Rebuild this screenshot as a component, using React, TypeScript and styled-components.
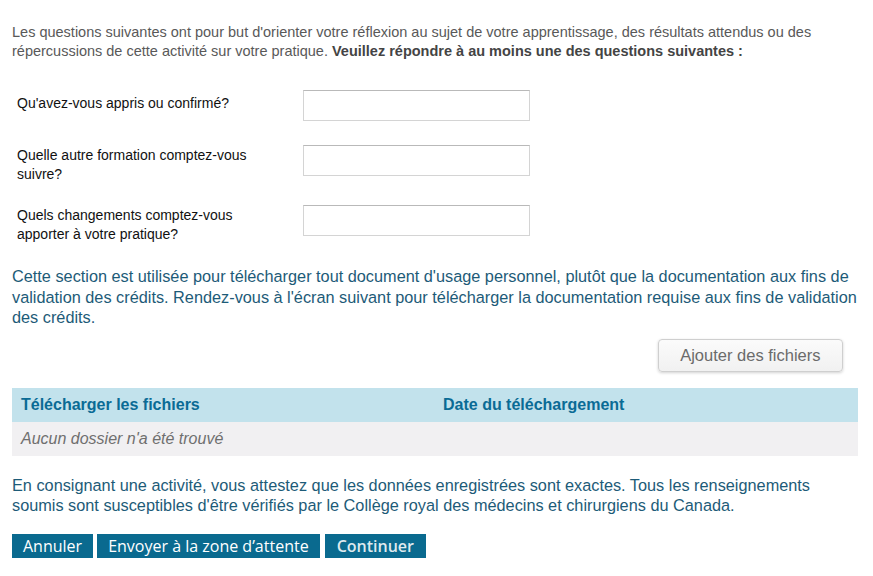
import React from "react";
import styled, { createGlobalStyle } from "styled-components";

const Global = createGlobalStyle`
  html, body { margin: 0; padding: 0; background: #ffffff; }
  body { font-family: "Liberation Sans", Arial, sans-serif; }
`;

const Page = styled.div`
  width: 873px;
  padding: 23px 15px 0 12px;
  box-sizing: border-box;
  display: flex;
  flex-direction: column;
`;

const Intro = styled.p`
  margin: 0;
  font-size: 14.5px;
  line-height: 19px;
  color: #595959;
  strong { color: #444444; font-weight: bold; }
`;

const Questions = styled.div`
  margin-top: 29px;
  padding-left: 5px;
  display: flex;
  flex-direction: column;
  gap: 22px;
`;

const QuestionRow = styled.div`
  display: grid;
  grid-template-columns: 286px 227px;
  align-items: start;
`;

const QuestionLabel = styled.label<{ $single?: boolean }>`
  font-size: 14px;
  line-height: 18.5px;
  color: #111111;
  padding-top: ${(p) => (p.$single ? "4px" : "1px")};
  padding-right: 30px;
`;

const TextInput = styled.input`
  width: 227px;
  height: 31px;
  box-sizing: border-box;
  border: 1px solid #d4d4d4;
  border-top-color: #b9b9b9;
  background: #ffffff;
  margin: 0 0 2px 0;
`;

const Notice = styled.p<{ $top: number }>`
  margin: ${(p) => p.$top}px 0 0 0;
  font-size: 16.3px;
  line-height: 20.5px;
  color: #1d5b78;
`;

const ActionRow = styled.div`
  display: flex;
  justify-content: flex-end;
  margin-top: 11px;
  margin-right: 15px;
`;

const AddButton = styled.button`
  height: 33px;
  padding: 0 21.5px;
  font-family: "Liberation Sans", Arial, sans-serif;
  font-size: 16.5px;
  color: #6b6b6b;
  background: linear-gradient(#fbfbfb, #f1f1f1);
  border: 1px solid #cfcfcf;
  border-radius: 4px;
  box-shadow: 0 1px 3px rgba(0, 0, 0, 0.18);
`;

const Table = styled.div`
  margin-top: 16px;
  width: 846px;
  display: flex;
  flex-direction: column;
`;

const HeaderRow = styled.div`
  display: grid;
  grid-template-columns: 422px 1fr;
  height: 34px;
  align-items: center;
  padding-left: 9px;
  background: #c2e2ec;
`;

const HeaderCell = styled.div`
  font-size: 16px;
  font-weight: bold;
  color: #0a6b95;
`;

const EmptyRow = styled.div`
  height: 34px;
  display: flex;
  align-items: center;
  padding-left: 9px;
  background: #f1f0f2;
  font-size: 16px;
  font-style: italic;
  color: #6f6f6f;
`;

const Buttons = styled.div`
  display: flex;
  gap: 4px;
  margin-top: 18px;
`;

const NavButton = styled.button<{ $strong?: boolean }>`
  height: 24px;
  padding: 0 ${(p) => (p.$strong ? "12px" : "11px")};
  border: none;
  background: #0a6a8f;
  color: ${(p) => (p.$strong ? "#dfe9ee" : "#ffffff")};
  font-family: "Open Sans", "Noto Sans", sans-serif;
  font-size: 16px;
  font-weight: ${(p) => (p.$strong ? 600 : 400)};
  line-height: 24px;
  margin-left: ${(p) => (p.$strong ? "1px" : "0")};
`;

export default function App() {
  return (
    <>
      <Global />
      <Page>
        <Intro>
          Les questions suivantes ont pour but d'orienter votre réflexion au sujet de votre apprentissage, des résultats attendus ou des répercussions de cette activité sur votre pratique.{" "}
          <strong>Veuillez répondre à au moins une des questions suivantes :</strong>
        </Intro>

        <Questions>
          <QuestionRow>
            <QuestionLabel $single>Qu'avez-vous appris ou confirmé?</QuestionLabel>
            <TextInput type="text" />
          </QuestionRow>
          <QuestionRow>
            <QuestionLabel>Quelle autre formation comptez-vous suivre?</QuestionLabel>
            <TextInput type="text" />
          </QuestionRow>
          <QuestionRow>
            <QuestionLabel>Quels changements comptez-vous apporter à votre pratique?</QuestionLabel>
            <TextInput type="text" />
          </QuestionRow>
        </Questions>

        <Notice $top={23}>
          Cette section est utilisée pour télécharger tout document d'usage personnel, plutôt que la documentation aux fins de validation des crédits. Rendez-vous à l'écran suivant pour télécharger la documentation requise aux fins de validation des crédits.
        </Notice>

        <ActionRow>
          <AddButton>Ajouter des fichiers</AddButton>
        </ActionRow>

        <Table>
          <HeaderRow>
            <HeaderCell>Télécharger les fichiers</HeaderCell>
            <HeaderCell>Date du téléchargement</HeaderCell>
          </HeaderRow>
          <EmptyRow>Aucun dossier n'a été trouvé</EmptyRow>
        </Table>

        <Notice $top={19}>
          En consignant une activité, vous attestez que les données enregistrées sont exactes. Tous les renseignements soumis sont susceptibles d'être vérifiés par le Collège royal des médecins et chirurgiens du Canada.
        </Notice>

        <Buttons>
          <NavButton>Annuler</NavButton>
          <NavButton>Envoyer à la zone d’attente</NavButton>
          <NavButton $strong>Continuer</NavButton>
        </Buttons>
      </Page>
    </>
  );
}
